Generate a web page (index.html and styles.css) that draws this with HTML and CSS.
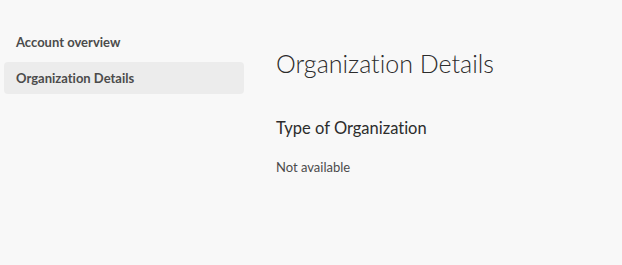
FILE: index.html
```html
<!DOCTYPE html>
<html lang="en">
<head>
    <meta charset="UTF-8">
    <title>Organization Details</title>
    <link rel="stylesheet" href="styles.css">
</head>
<body>
    <div class="layout">
        <!-- Side Navigation -->
        <nav class="side-nav">
            <a class="nav-item" href="#">Account overview</a>
            <a class="nav-item selected" href="#">Organization Details</a>
        </nav>

        <!-- Main Content -->
        <main class="content">
            <h1 class="page-title">Organization Details</h1>
            <h2 class="section-title">Type of Organization</h2>
            <p class="section-value">Not available</p>
        </main>
    </div>
</body>
</html>
```

FILE: styles.css
```css
/* Global Styles */
* {
    box-sizing: border-box;
    font-family: Lato, "Noto Sans", sans-serif;
    font-variant-ligatures: none;
}

body {
    margin: 0;
    padding: 0;
    background-color: #f8f8f8;
    color: #4b4b4b;
}

.layout {
    display: flex;
    height: 265px;
}

/* Side Navigation */
.side-nav {
    width: 244px;
    padding: 26px 0 0 4px;
    display: flex;
    flex-direction: column;
    gap: 4px;
}

.nav-item {
    display: block;
    height: 32px;
    line-height: 32px;
    padding: 0 12px;
    border-radius: 4px;
    font-size: 13px;
    font-weight: 700;
    color: #4b4b4b;
    text-decoration: none;
}

.nav-item.selected {
    background-color: #ececec;
}

/* Main Content */
.content {
    padding: 43px 0 0 32px;
}

.page-title {
    margin: 0;
    font-size: 25px;
    font-weight: 300;
    line-height: 40px;
    color: #2c2c2c;
}

.section-title {
    margin: 33px 0 0;
    font-size: 16.5px;
    font-weight: 400;
    line-height: 24px;
    color: #2c2c2c;
}

.section-value {
    margin: 17px 0 0;
    font-size: 13px;
    line-height: 20px;
    color: #4b4b4b;
}
```
